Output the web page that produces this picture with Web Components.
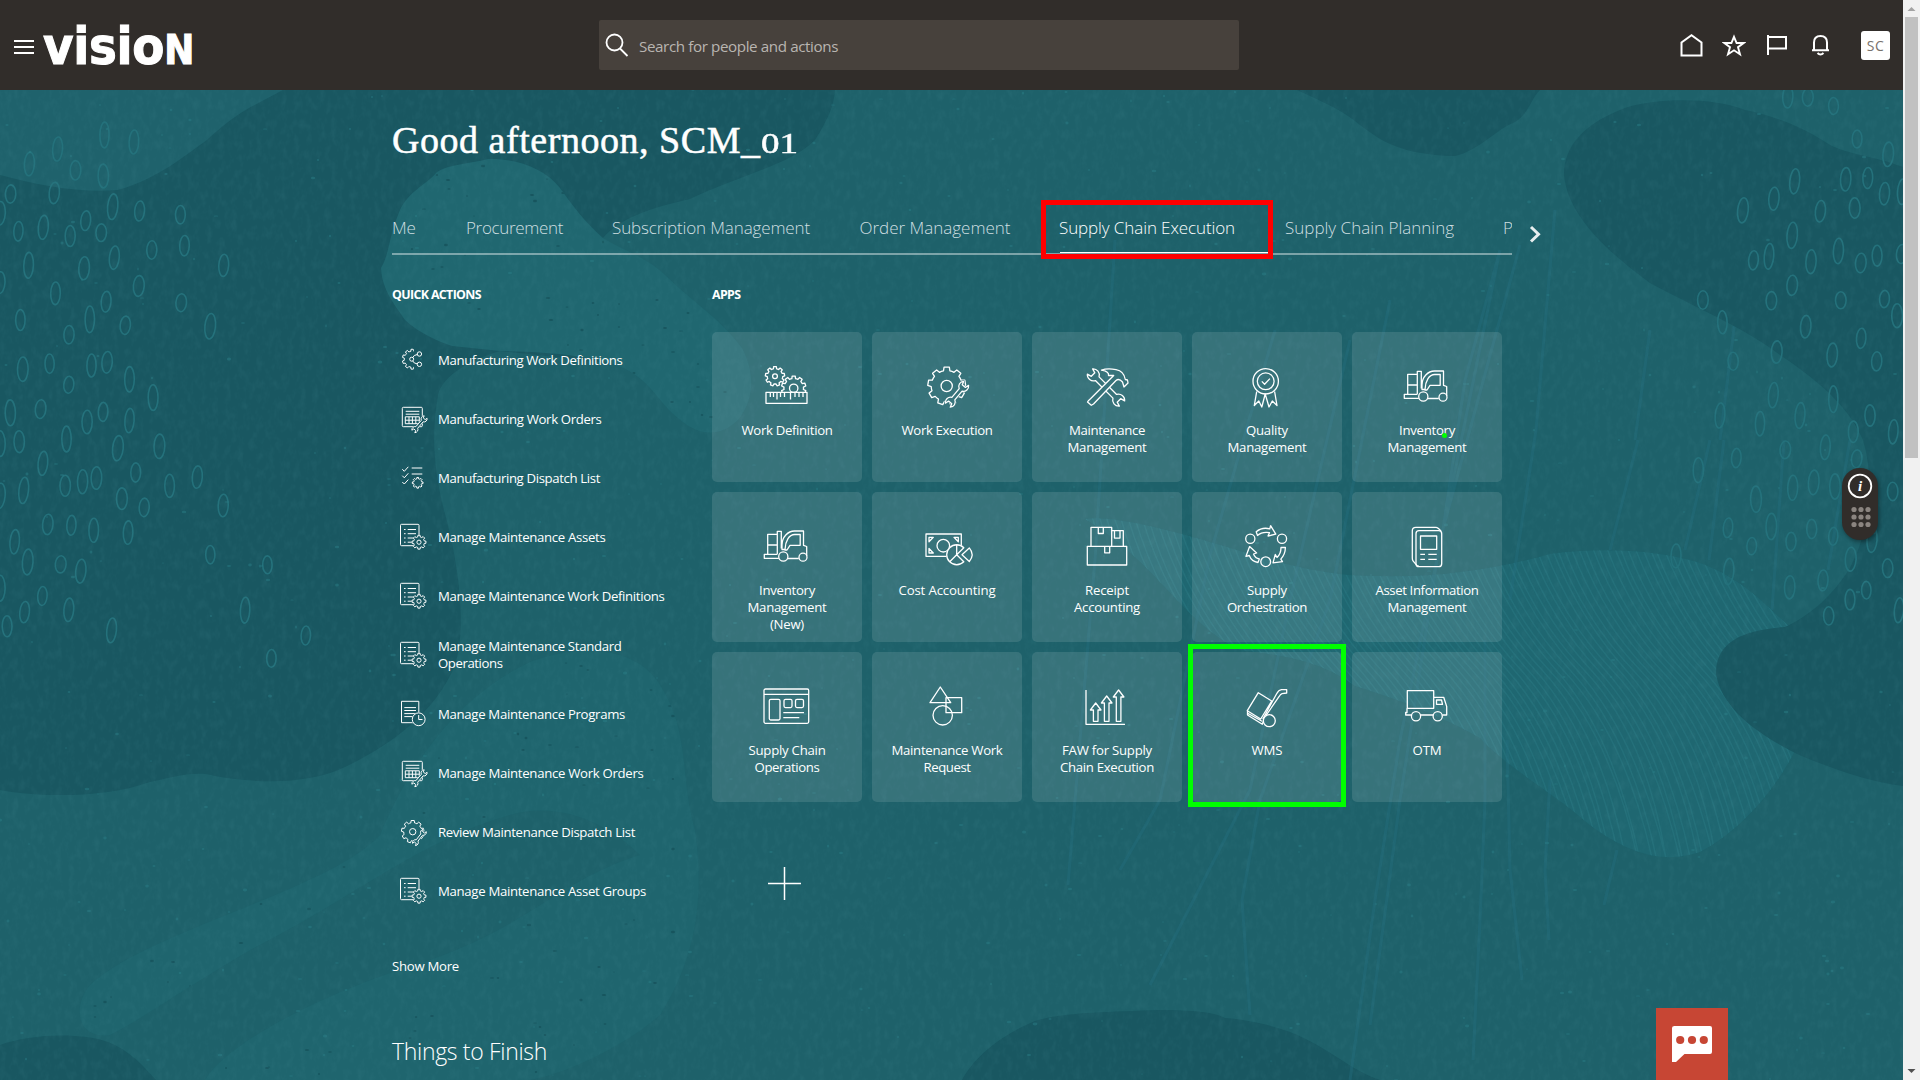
<!DOCTYPE html>
<html lang="en">
<head>
<meta charset="utf-8">
<title>Vision</title>
<style>
html,body{margin:0;padding:0;width:1920px;height:1080px;overflow:hidden;background:#1e6069}
body{font-family:"Open Sans","Noto Sans","Liberation Sans",sans-serif;color:#fff}
</style>
</head>
<body>
<app-shell></app-shell>
<script>
const gear=(cx,cy,R,r,n)=>{
  let d='';const s=Math.PI*2/n,p=(rad,a)=>(cx+rad*Math.cos(a)).toFixed(2)+' '+(cy+rad*Math.sin(a)).toFixed(2);
  for(let i=0;i<n;i++){const a=i*s-Math.PI/2;
    d+=(i?'L':'M')+p(r,a-s*.3)+'L'+p(R,a-s*.2)+'L'+p(R,a+s*.2)+'L'+p(r,a+s*.3)+`A${r} ${r} 0 0 1 `+p(r,a+s*.7);}
  return d+'Z';
};
const wrenchPath=(x1,y1,x2,y2,R,w)=>{
  const L=Math.hypot(x2-x1,y2-y1),t=Math.atan2(y2-y1,x2-x1),c=Math.cos(t),s=Math.sin(t);
  const p=(x,y)=>(x1+x*c-y*s).toFixed(2)+' '+(y1+x*s+y*c).toFixed(2);
  const A=`A${R} ${R} 0 0 1 `,k=.85*R;
  return 'M'+p(k,-w)+'L'+p(L-k,-w)+A+p(L+.8*R,-.6*R)+'L'+p(L+.1*R,-.4*R)+'L'+p(L+.1*R,.4*R)+'L'+p(L+.8*R,.6*R)+A+p(L-k,w)+
  'L'+p(k,w)+A+p(-.8*R,.6*R)+'L'+p(-.1*R,.4*R)+'L'+p(-.1*R,-.4*R)+'L'+p(-.8*R,-.6*R)+A+p(k,-w)+'Z';
};
const P=d=>`<path d="${d}"/>`;
const C=(x,y,r)=>`<circle cx="${x}" cy="${y}" r="${r}"/>`;
const over=(under,top,topD,n)=>`<mask id="m" maskUnits="userSpaceOnUse" x="-5" y="-5" width="70" height="70"><rect x="-5" y="-5" width="70" height="70" fill="#fff" stroke="none"/><path d="${topD}" fill="#000" stroke="#000" stroke-width="${n}"/></mask><g mask="url(#m)">${under}</g>${top}`;
const arrowUp=(x,t)=>P(`M${x-2.3} 39.3V${t+7}H${x-5.3}L${x} ${t}L${x+5.3} ${t+7}H${x+2.3}V39.3Z`);
const circ=(x,y,r)=>`M${x-r} ${y}a${r} ${r} 0 1 0 ${2*r} 0a${r} ${r} 0 1 0 ${-2*r} 0Z`;

const wExec=wrenchPath(40.5,24.5,27.5,40,5.2,1.9);
const wOrd=wrenchPath(25,15,16,25.5,3.2,1.2);
const wRev=wrenchPath(24.3,15.5,16.5,25.5,3.1,1.1);
const gList=gear(20,20.2,7,5.4,8);
const forklift=P('M14.3 12.3H4.7V32.3M4.7 23H14.3M14.3 32.3V9.3H18.3V26.5M14.3 32.3H1.3V36.3H15.8M21.5 27.5H19V23C19 15 25 9 31.5 9H40.5V23.3L43.7 24.5V34M22 27.5C22.3 19 26 12.5 31.8 12.5H37.2V23.3H27L24 28H21.5M25 36.5H35.8')+C(20.3,34.5,4.6)+C(40,35.2,4);
const hammer='M30.7 13.5L7.5 36.8Q5 39 4.5 40L8.3 43.3L10.5 42L33 18.5Q36 16 39.5 20L41 25L45 21L44.5 18L42.3 17.5Q41 9 33 7.6Q24 6 18.5 8.2Q26.5 9.5 25.5 13.5Z';
const ICONS={
 workdef:over(P(gear(30.7,26.3,12.3,9.8,10))+C(30.7,26.3,4.2),P(gear(12,14.3,9.7,7.7,9))+C(12,14.3,2.4)+P('M3 30.3H44V41.3H3ZM7.3 30.5v4.5M10.5 30.5v4.5M14 30.5v7M17.5 30.5v4.5M21.5 30.5v4.5M27.5 30.5v7M32 30.5v4.5M36 30.5v4.5M40 30.5v4.5'),'M3 30.5H44V46H3ZM12 5a9 9 0 1 0 .1 0Z',.5),
 workexec:over(P(gear(23.7,24,19,15.5,9))+C(23.7,24,5.6),P(wExec),wExec,2.2),
 maint:over(P(wrenchPath(10.5,13,35.5,38,6.2,2.6)),P(hammer),hammer,.6),
 quality:C(22.7,19.3,12.7)+C(22.7,19.3,8.4)+P('M18.8 19.4l2.8 2.8l5.3-5.6M13.7 29.5L11.3 43.5L15.8 39L18.8 45L22.2 32L26 45L29.3 39L34 43.5L31.6 29.5'),
 forklift,
 cost:over(P('M3 12H38.3V34.3H3ZM6 15.3h4.3l-4.3 4.5ZM35.3 15.3h-4.3l4.3 4.5ZM6 31h4.3l-4.3-4.5Z')+C(20.3,23.7,6.3),P('M33.7 32.7L40.8 25.7A10 10 0 1 0 40.8 39.8ZM33.7 32.7V22.7M33.7 32.7L26.7 39.8M39 32.7L46.3 25.9Q52 32.7 46.3 39.5Z'),circ(33.7,32.7,10.3),.5),
 boxes:P('M4.3 24.3H43.7V43H4.3ZM8 24.3V5.3H28.7V24.3M28.7 8.7H40.3V24.3M15.3 5.5v6h5v-6M31.5 8.8v7.3h5.5v-7.3M21.7 24.5v6.3h5v-6.3'),
 orch:C(7.3,16.7,4.6)+C(39,16.7,4.6)+C(22.7,39.7,4.9)+P('M14.5 13.5Q19 9.5 26.5 10.7L25 14L32.8 12.2L27.6 3.7L26.8 6.8Q19 4.8 13.2 9.8ZM38 25.5Q38 32 34 35.4L32.3 32.5L30 40.8L39.5 39.7L37.8 37.1Q42.3 32.3 42.4 25.5ZM15 40.5Q8.5 39.5 6.3 33.5L3 34.3L6.6 24.6L13.6 31L10.5 32Q12.3 36.3 16.3 37Z'),
 asset:P('M16 44.2H14.5L10 38.8Q9.3 38 9.3 36V8.8Q9.3 5.3 12.8 5.3H33Q35 5.3 38 9.2')+'<rect x="13" y="8.7" width="25.7" height="36" rx="3"/><rect x="17.5" y="14" width="16.2" height="13.3"/>'+P('M17.3 32.3h4.7M25.3 32.3h8.4M17.3 37.3h4.7M25.3 37.3h8.4'),
 sco:'<rect x="1" y="7" width="44.7" height="34.3" rx="1.5"/><rect x="6.3" y="17.3" width="10.7" height="20.7" rx="1.5"/><rect x="21" y="17.3" width="8" height="8.3" rx="1.5"/><rect x="32.5" y="17.3" width="8" height="8.3" rx="1.5"/>'+P('M1 12.3H45.7M20.3 30.7H41M20.3 35.7H36.3'),
 shapes:'<rect x="23" y="15.7" width="15.7" height="15"/>'+P('M17.3 5L7 20.7H27.7Z')+C(19.7,33.3,9.7),
 growth:P('M3 8V42.3H42')+arrowUp(12.7,21)+arrowUp(23.7,14)+arrowUp(35.6,8),
 dolly:P('M15.3 10.7L28.7 19L17.7 37L4.3 28.7ZM19.7 37.3L33.5 12Q35.7 8 38.5 7.7H43.7V11L39 11.6Q37.3 12.2 36 14.7L23 33.5M4.5 28.7V33L19.3 42.2L20.5 38.7M4.3 31L19 39.3')+C(26.3,38.7,6),
 truck:P('M4.3 8.7H30.7V26.3H4.3ZM30.7 15.3H40.7L43.7 24.5V33H39.3M30 33H17.6M8.3 33H2.7V30.5H4V26.3M33.5 18H38.5L39.5 22.3H33.5Z')+C(13,34.3,4.6)+C(34.7,34.3,4.6),
 mwd:'<clipPath id="c"><path d="M0 0H12L15 5L14 14L15 23L13 30H0Z"/></clipPath><g clip-path="url(#c)">'+P(gear(13.3,14.2,10,8,10))+'</g>'+C(20.4,9,2.2)+C(20.4,19.3,2.2)+P('M18.3 9.5Q14.5 10 13.8 12.5M18.3 18.9Q14.5 18.4 13.8 16')+C(12.7,14.2,2),
 worder:over('<rect x="3.3" y="3.3" width="20" height="19.4" rx="1"/>'+P('M6.7 7.3H20.3M6.7 10.2H20.3M6.3 12.8H20.3V19.7H6.3ZM6.3 16.2H20.3M10 12.8V19.7M13.4 12.8V19.7M16.8 12.8V19.7'),P(wOrd),wOrd,1.2),
 dispatch:P('M3.3 6.2L5.3 8.3L9.3 3.8M3.3 12.7L5.3 14.8L9.3 10.3M3.3 19L5.3 21L9.3 16.6M12.7 5H23.3M12.7 11H23.3')+P(gear(18.7,19.8,5.4,4,8)),
 list:over('<rect x="1.5" y="2.3" width="18.5" height="21.4" rx="1"/>'+P('M5 7.5h1.6M8.7 7.5h8.3M5 11.7h1.6M8.7 11.7h8.3M5 16h1.6M8.7 16h8.3M5 20.2h1.6M8.7 20.2h8.3'),P(gList)+C(20,20.2,2.1),gList,.8),
 programs:over('<rect x="2.5" y="2.3" width="17.3" height="21.4"/>'+P('M5.3 8.6H17M5.3 11.5H17M5.3 14.6H17M5.3 17.6H15'),C(19.7,20.3,6.4)+P('M19.7 16V20.5H23.5'),circ(19.7,20.3,6.6),.8),
 review:over(P(gear(13.7,14.7,11.3,9,9))+C(13.7,14.7,3.2),P(wRev),wRev,1.4)
};

const define=(name,html,setup)=>customElements.define(name,class extends HTMLElement{
  connectedCallback(){
    if(this.shadowRoot)return;
    const t=document.createElement('template');
    t.innerHTML=typeof html==='function'?html(this):html;
    this.attachShadow({mode:'open'}).append(t.content.cloneNode(true));
    if(setup)setup(this);
  }
});

/* Single line of text whose tracking is tuned to a given advance width. */
define('fit-text','<style>:host{display:inline-block;white-space:nowrap}</style><slot></slot>',el=>{
  const w=+el.getAttribute('w'),n=el.textContent.length,now=el.getBoundingClientRect().width;
  if(w&&now)el.style.letterSpacing=((w-now)/n).toFixed(3)+'px';
});

define('line-icon',el=>{const s=+el.getAttribute('size');
  return `<style>:host{display:block;width:${s}px;height:${s}px;flex:none}svg{display:block;overflow:visible;fill:none;stroke:#fff;stroke-width:${s>40?1.3:1};stroke-linejoin:round}</style><svg width="${s}" height="${s}">${ICONS[el.getAttribute('name')]}</svg>`;});

const ringsL=[[256,405],[328,426],[141,447],[72,492],[185,511],[253,528],[133,579],[26,582],[0,640],[276,620],[342,633],[442,644],[210,662],[106,682],[45,694],[172,708],[248,698],[280,773],[372,750],[452,737],[548,796],[70,796],[206,805],[0,848],[340,858],[136,880],[260,905],[444,908],[50,960],[220,958],[169,1004],[307,976],[515,979]].map(([x,y])=>[x/2.45,y/3]);
const ringsL2=[[51,20],[111,8],[205,12],[240,5],[290,42],[343,82],[154,54],[23,115],[91,107],[195,135],[231,113],[290,132],[43,178],[149,172],[0,182],[264,192],[357,188],[96,225],[304,245],[216,257],[185,265],[146,274],[53,284],[0,296],[380,274],[442,255],[273,302],[323,321],[500,317],[107,358],[160,360],[210,371],[287,376],[33,396],[62,440],[136,445],[181,460],[471,424],[599,446],[0,497],[95,514],[55,549],[154,544],[16,580],[250,589],[549,545],[685,600],[608,650]].map(([x,y])=>[x/2.24,y/2.178+360]);
const ringsR=[[1244,290],[1293,292],[1356,318],[1414,417],[1490,463],[1261,544],[1386,538],[1440,534],[1481,581],[1210,596],[1134,631],[1324,634],[1408,624],[1525,575],[1255,706],[1160,781],[1198,769],[1301,785],[1368,753],[1423,789],[1463,767],[1523,762],[1255,856],[1204,902],[1374,901],[1481,897],[1036,900],[1512,947],[1084,967],[1288,980],[1424,1015],[1217,1056],[1353,1065],[1110,1084],[1462,1084]].map(([x,y])=>[x/2.45+1280,y/3]);
const ringsR2=[[709,44],[595,74],[856,24],[976,18],[1070,46],[878,117],[941,104],[1005,114],[1178,126],[768,145],[684,215],[814,212],[755,260],[873,249],[935,218],[1000,236],[1116,245],[528,284],[686,322],[1052,292],[1163,314],[869,361],[969,344],[1099,368],[1050,391],[986,431],[1197,417],[780,-40],[900,-60],[1000,-100],[1110,-60],[1180,-20],[660,-60],[1060,-20],[820,-110]].map(([x,y])=>[x/3+1500,y/2.45+440]);

define('page-backdrop',()=>{
  let seed=7;const rnd=()=>(seed=(seed*16807)%2147483647)/2147483647;
  const rings=[...ringsL,...ringsL2,...ringsR,...ringsR2].map(([x,y])=>`<ellipse cx="${x.toFixed(1)}" cy="${y.toFixed(1)}" rx="${(4.6+rnd()*.8).toFixed(1)}" ry="${(8.5+rnd()*4.8).toFixed(1)}" transform="rotate(${(rnd()*7-1).toFixed(1)} ${x.toFixed(1)} ${y.toFixed(1)})"/>`).join('');
  let specks='',dark='',stripes='';
  for(let i=0;i<620;i++){const x=rnd()*1903,y=90+rnd()*990;specks+=`<ellipse cx="${x.toFixed(0)}" cy="${y.toFixed(0)}" rx="${(.6+rnd()*1.8).toFixed(1)}" ry="${(.5+rnd()).toFixed(1)}"/>`;}
  for(let i=0;i<420;i++){const x=60+rnd()*700,y=150+rnd()*930;dark+=`<ellipse cx="${x.toFixed(0)}" cy="${y.toFixed(0)}" rx="${(.6+rnd()*1.6).toFixed(1)}" ry="${(.5+rnd()*.8).toFixed(1)}"/>`;}
  for(let i=0;i<130;i++){const x=920+i*7;stripes+=`M${x} 500q${22+rnd()*6} 100 90 170t${85+rnd()*10} 210`;}
  const A='M603 238C585 222 572 205 560 188C545 168 515 158 488 159C468 164 450 164 437 172C425 186 406 192 398 215C388 240 390 252 381 268C382 290 395 305 405 320C420 334 440 342 452 346L500 351C550 352 580 355 610 363C650 375 655 400 678 418C700 438 722 436 738 420C756 398 754 370 742 348C720 318 690 300 665 275C645 256 622 250 603 238Z';
  const B='M380 835C405 775 450 700 530 662C580 643 640 645 663 690C690 735 680 780 695 830C705 900 695 960 660 1015C620 1050 560 1075 530 1080H205C230 1040 330 990 430 960C530 925 560 880 640 855C610 825 560 800 510 815C420 840 350 900 250 950C190 985 140 1020 110 1035C80 1040 70 1010 90 985C150 930 330 890 380 835Z';
  return `<style>:host{display:block;position:absolute;inset:0;z-index:-1}svg{display:block}</style>
<svg width="1903" height="1080" viewBox="0 0 1903 1080">
<defs><clipPath id="sc"><path d="M1085 519C1110 515 1160 528 1200 539C1270 560 1320 577 1380 576C1440 578 1500 568 1550 554C1600 547 1660 550 1700 563C1745 580 1765 605 1790 627L1800 740C1785 775 1750 825 1700 852C1665 864 1630 855 1590 825C1550 790 1510 770 1480 738C1440 715 1400 700 1355 686C1320 660 1280 655 1240 650C1180 620 1160 565 1085 519Z"/></clipPath>
<clipPath id="lc"><path d="${A}${B}"/></clipPath>
<filter id="noise" x="0" y="0" width="100%" height="100%"><feTurbulence type="fractalNoise" baseFrequency=".16 .1" numOctaves="3" seed="4"/><feColorMatrix values="0 0 0 0 .08  0 0 0 0 .3  0 0 0 0 .34  2 0 0 0 -.85"/></filter></defs>
<rect width="1903" height="1080" fill="#1e616a"/>
<path fill="#195761" d="M0 90V790C30 796 100 800 150 782C170 778 195 770 215 776C260 784 310 784 345 767C385 748 435 715 455 665C466 630 460 575 448 525C435 480 430 440 438 395C443 375 470 360 500 351L610 363L640 300L603 238C620 218 650 208 690 199C740 175 790 165 815 140C828 120 834 105 835 90Z"/>
<path fill="#1f626c" d="M0 90V175C40 186 80 193 118 190C160 178 185 155 207 140C240 110 250 108 283 90Z"/>
<path fill="#206770" d="${A}"/><path fill="#1f656e" d="${B}"/>
<path fill="#195761" d="M0 1045C30 1034 80 1032 108 1042C130 1050 145 1068 156 1080H0ZM962 1080C970 1065 990 1040 1035 1021C1060 1013 1100 1012 1160 1010C1190 1010 1215 1012 1225 1018C1250 1020 1270 1025 1290 1032C1330 1048 1350 1070 1380 1080Z"/>
<path fill="#195761" d="M1297 90C1330 105 1345 112 1360 125C1380 140 1400 155 1455 156C1480 150 1495 130 1515 122C1530 112 1530 100 1540 90Z"/>
<g clip-path="url(#sc)"><rect x="1050" y="500" width="800" height="380" fill="#1f6771"/><path d="${stripes}" fill="none" stroke="#26747d" stroke-width="1.5" opacity=".7"/></g>
<g fill="none" stroke="#246f80" stroke-width="3" opacity=".4"><path d="M1115 240L1095 560L1068 885M1275 330L1210 555L1160 800L1120 870M1350 340L1290 600L1250 790L1150 985M1555 210L1536 430L1510 600M1520 245L1440 540L1400 800L1370 1025M1500 250L1465 380L1440 550M1638 440L1610 550M1710 440L1685 550M1724 440L1709 560M1784 440L1772 610M1850 440L1828 570M1390 300L1330 600L1260 800L1242 900L1250 1015M1500 250L1400 740L1375 900L1350 1080M1485 640V800L1480 920L1473 1060M1507 740L1510 870L1522 980M1550 780L1545 870L1549 940M1617 850L1604 905M1650 330L1635 440M1735 320L1720 440"/></g>
<path fill="#195761" d="M1903 167C1870 155 1850 155 1830 145C1800 125 1770 115 1745 110C1715 98 1660 97 1625 108C1585 123 1564 145 1564 175C1568 215 1605 250 1650 283C1700 310 1745 328 1780 355C1825 385 1850 410 1863 440C1875 480 1870 530 1850 568C1830 600 1805 618 1785 627C1745 630 1716 640 1716 674C1722 710 1760 735 1797 754C1835 770 1870 782 1903 786Z"/>
<g fill="none" stroke="#24717b" stroke-width="1.6">${rings}</g>
<g fill="#2a7d86" opacity=".5">${specks}</g><g fill="#154f58" opacity=".7" clip-path="url(#lc)">${dark}</g>
<rect y="90" width="1903" height="990" filter="url(#noise)" opacity=".12"/>
</svg>`;});

define('search-box',`<style>:host{display:flex;align-items:center;width:640px;height:50px;background:#47413c;border-radius:2px;box-sizing:border-box;padding-left:6px;color:#b9b5b1;font-size:15.2px}svg{margin-right:10px;margin-top:-1px}fit-text{margin-top:1px}</style>
<svg width="24" height="24" fill="none" stroke="#fff" stroke-width="1.8"><circle cx="9.5" cy="9.5" r="8"/><path d="M15 15.5L22.5 23"/></svg><fit-text w="199">Search for people and actions</fit-text>`);

define('top-bar',`<style>:host{display:flex;align-items:center;height:90px;background:#312d2a;flex:none}
.left{display:flex;width:599px;height:90px;align-items:center;padding-left:14px;box-sizing:border-box}
.logo{font-family:"DejaVu Sans Condensed","DejaVu Sans",sans-serif;font-stretch:condensed;font-size:52px;font-weight:700;line-height:60px;height:60px;margin-left:9px;margin-top:1px;-webkit-text-stroke:1px #fff}.logo i{font-style:normal;font-variant-caps:small-caps;font-size:57px;line-height:1px}
.right{flex:1;display:flex;justify-content:flex-end;align-items:center;padding-right:13px}
.right svg{display:block;margin-right:20px}
.me{display:flex;align-items:center;justify-content:center;width:29px;height:29px;background:#fff;border-radius:3px;color:#77716c;font-size:14px;margin-left:9px}</style>
<div class="left"><svg width="20" height="14" style="margin-top:4px"><path d="M0 1H20M0 7H20M0 13H20" stroke="#fff" stroke-width="2"/></svg><fit-text class="logo" w="151">visio<i>n</i></fit-text></div>
<search-box></search-box>
<div class="right">
<svg width="23" height="23" fill="none" stroke="#fff" stroke-width="2" style="margin-right:19.5px"><path d="M1.5 21.5V8.5L11.5 1.3L21.5 8.5V21.5Z"/></svg>
<svg width="24" height="23" fill="none" stroke="#fff" stroke-width="1.9"><path d="M12 2.8L14.6 9H21.6L16 13.2L18 20.3L12 16.3L6 20.3L8 13.2L2.4 9H9.4Z"/></svg>
<svg width="23" height="22" fill="none" stroke="#fff" stroke-width="2"><path d="M2 1V21M2 3H20V14.5H2"/></svg>
<svg width="23" height="22" fill="none" stroke="#fff" stroke-width="2"><path d="M3 16.3H20M5 16V8.5Q5 2 11.5 2T18 8.5V16"/><path d="M8.5 19Q11.5 22 14.5 19"/></svg>
<div class="me"><fit-text w="17.5">SC</fit-text></div></div>`);

define('nav-tabs',()=>{
  const t=[['Me',23.5,74],['Procurement',97,146],['Subscription Management',198,247.5],['Order Management',151,199.5],['Supply Chain Execution',176,226,1],['Supply Chain Planning',169,218],['P',9,9]];
  return `<style>:host{display:flex;align-items:flex-start}.tabs{display:flex;width:1120px;overflow:hidden;height:41px;border-bottom:2px solid rgba(255,255,255,.42);position:relative;font-size:17px;line-height:30px;font-weight:300;color:#cfdfe1}
.t{flex:none;height:40px;padding-top:1px}.on{color:#fff}.bar{position:absolute;left:668px;bottom:0;width:210px;height:1px;background:#fff}
.ring{position:absolute;left:1041px;top:200px;width:232px;height:59px;box-sizing:border-box;border:5px solid #f00}svg{margin:13px 0 0 17px}</style>
<div class="tabs">${t.map(([n,w,f,on])=>`<div class="t${on?' on':''}" style="width:${f}px"><fit-text w="${w}">${n}</fit-text></div>`).join('')}<div class="bar"></div></div>
<svg width="14" height="18" fill="none" stroke="#e6eeef" stroke-width="3"><path d="M2 2L9.5 9.2L2 16.5"/></svg><div class="ring"></div>`;});

define('quick-action',el=>`<style>:host{display:flex;height:44px;padding-top:15px;padding-left:7px;align-items:flex-start}.l{display:flex;flex-direction:column;justify-content:center;height:30px;margin-left:9px;font-size:13.2px;line-height:17px}</style>
<line-icon size="30" name="${el.getAttribute('icon')}"></line-icon><div class="l"><slot></slot></div>`);

define('quick-actions',()=>{
  const a=[['mwd',['Manufacturing Work Definitions',184.5]],['worder',['Manufacturing Work Orders',163.5]],['dispatch',['Manufacturing Dispatch List',162]],['list',['Manage Maintenance Assets',167.5]],['list',['Manage Maintenance Work Definitions',226.5]],['list',['Manage Maintenance Standard',183.5],['Operations',64.5]],['programs',['Manage Maintenance Programs',187]],['worder',['Manage Maintenance Work Orders',205.5]],['review',['Review Maintenance Dispatch List',197]],['list',['Manage Maintenance Asset Groups',208]]];
  return `<style>:host{display:block;width:320px}h2{margin:0 0 25px;padding-top:1px;height:20px;font-size:12.4px;line-height:20px;font-weight:700}.more{margin-top:36px;height:20px;font-size:13.2px;line-height:20px}.next{margin-top:55px;height:40px;font-size:23px;line-height:40px;font-weight:300}</style>
<h2><fit-text w="89">QUICK ACTIONS</fit-text></h2>${a.map(([i,...l])=>`<quick-action icon="${i}">${l.map(([s,w])=>`<div><fit-text w="${w}">${s}</fit-text></div>`).join('')}</quick-action>`).join('')}
<div class="more"><fit-text w="67">Show More</fit-text></div><div class="next"><fit-text w="155">Things to Finish</fit-text></div>`;});

define('app-tile',el=>`<style>:host{display:flex;flex-direction:column;align-items:center;width:150px;height:150px;box-sizing:border-box;padding-top:30px;border-radius:5px;background:rgba(255,255,255,.115);font-size:13.2px;line-height:17px;text-align:center}.l{margin-top:12px}</style>
<line-icon size="48" name="${el.getAttribute('icon')}"></line-icon><div class="l"><slot></slot></div>`);

define('app-grid',()=>{
  const t=[['workdef',['Work Definition',91]],['workexec',['Work Execution',91]],['maint',['Maintenance',76],['Management',79]],['quality',['Quality',42],['Management',79]],['forklift',['Inventory',56],['Management',79]],
  ['forklift',['Inventory',56],['Management',79],['(New)',34]],['cost',['Cost Accounting',97]],['boxes',['Receipt',44],['Accounting',66]],['orch',['Supply',40],['Orchestration',80]],['asset',['Asset Information',103],['Management',79]],
  ['sco',['Supply Chain',77],['Operations',65]],['shapes',['Maintenance Work',111],['Request',47]],['growth',['FAW for Supply',90],['Chain Execution',94]],['dolly',['WMS',31]],['truck',['OTM',29]]];
  return `<style>:host{display:block;width:790px}h2{margin:0 0 27px;padding-top:1px;height:20px;font-size:12.4px;line-height:20px;font-weight:700}.g{display:grid;grid-template-columns:repeat(5,150px);gap:10px}.add{display:block;margin:65px 0 0 56px}
.ring{position:absolute;left:1188px;top:644px;width:158px;height:163px;box-sizing:border-box;border:5px solid #0f0}.dot{position:absolute;left:1441.5px;top:432.5px;width:5px;height:5px;border-radius:50%;background:#0f0}</style>
<h2><fit-text w="28.5">APPS</fit-text></h2><div class="g">${t.map(([i,...l])=>`<app-tile icon="${i}">${l.map(([s,w])=>`<div><fit-text w="${w}">${s}</fit-text></div>`).join('')}</app-tile>`).join('')}</div>
<svg class="add" width="34" height="34" stroke="#fff" stroke-width="1.5"><path d="M0 16.5H33M16.5 0V33"/></svg><div class="ring"></div><div class="dot"></div>`;});

define('home-page',`<style>:host{display:block;padding-left:392px;flex:1;overflow:hidden}h1{display:flex;align-items:baseline;height:50px;margin:25px 0 47px;font:400 38px/50px "Liberation Serif",serif;-webkit-text-stroke:.5px #fff}h1 span{display:block;font-size:28.5px;transform:scaleX(1.3);transform-origin:0 0}.cols{display:flex;margin-top:29px}</style>
<h1><fit-text w="368.5">Good afternoon, SCM_</fit-text><span>01</span></h1><nav-tabs></nav-tabs><div class="cols"><quick-actions></quick-actions><app-grid></app-grid></div>`);

define('assist-pill',`<style>:host{position:absolute;left:1842px;top:468px;width:36px;height:72px;border-radius:18px;background:#312d2a;box-shadow:1px 2px 4px rgba(0,0,0,.4)}svg{display:block}text{font:italic bold 15px "Liberation Serif",serif}</style>
<svg width="36" height="72"><circle cx="18" cy="18" r="11.3" fill="none" stroke="#fff" stroke-width="1.8"/><text x="18" y="23" text-anchor="middle" fill="#fff">i</text><g fill="#8b8580">${[12,19,26].map(x=>[41.5,49,56.5].map(y=>`<circle cx="${x}" cy="${y}" r="2.6"/>`).join('')).join('')}</g></svg>`);

define('chat-button',`<style>:host{position:absolute;left:1656px;top:1008px;width:72px;height:72px;background:#c74634}svg{display:block}</style>
<svg width="72" height="72"><path fill="#fff" d="M18.500 18H54Q56 18 56 20V44Q56 46 54 46H28.500L20 54H16V20Q16 18 18.500 18Z"/><g fill="#c74634"><circle cx="24.200" cy="32" r="4.100"/><circle cx="36" cy="32" r="4.100"/><circle cx="47.800" cy="32" r="4.100"/></g></svg>`);

define('scroll-rail',`<style>:host{display:flex;flex-direction:column;justify-content:space-between;align-items:center;width:17px;height:1080px;background:#f1f1f1;flex:none}.thumb{width:13px;height:441px;background:#c1c1c1}.sp{flex:1}svg{display:block}</style>
<svg width="17" height="17"><path d="M4.5 11L8.5 7L12.5 11Z" fill="#a3a3a3"/></svg><div class="thumb"></div><div class="sp"></div><svg width="17" height="17"><path d="M4.5 6L8.5 10L12.5 6Z" fill="#505050"/></svg>`);

define('app-shell',`<style>:host{display:flex;width:1920px;height:1080px;position:relative;overflow:hidden;isolation:isolate}.main{display:flex;flex-direction:column;width:1903px;height:1080px}</style>
<page-backdrop></page-backdrop><div class="main"><top-bar></top-bar><home-page></home-page></div><scroll-rail></scroll-rail><assist-pill></assist-pill><chat-button></chat-button>`);
</script>
</body>
</html>
